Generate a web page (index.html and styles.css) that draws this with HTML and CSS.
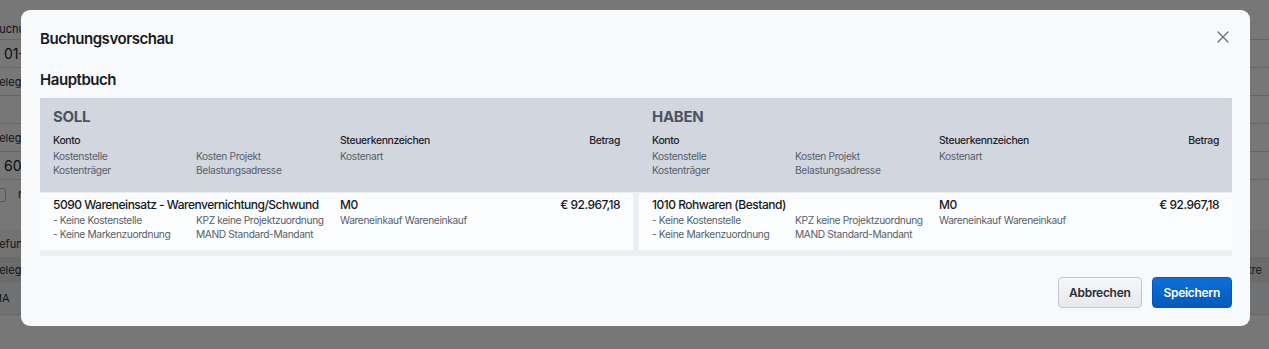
FILE: index.html
```html
<!DOCTYPE html>
<html>
<head>
    <title>Buchungsvorschau</title>
    <link rel="stylesheet" href="styles.css">
</head>
<body>
    <div class="page">
        <div class="page-row row-top"><span>Buchungsdatum</span><span></span></div>
        <div class="page-row row-input"><span>01-02-2024</span><span></span></div>
        <div class="page-row"><span>Belegnummer</span><span></span></div>
        <div class="page-row"><span></span><span></span></div>
        <div class="page-row"><span>Belegdatum</span><span></span></div>
        <div class="page-row row-input"><span>6001</span><span></span></div>
        <div class="page-row row-check"><span><i class="check"></i>nicht buchen</span><span></span></div>
        <div class="page-row row-spacer"><span></span><span></span></div>
        <div class="page-row row-section"><span>Befunde</span><span></span></div>
        <div class="page-row row-head"><span>Belegart</span><span>Mitre</span></div>
        <div class="page-row row-body"><span>MA</span><span></span></div>
    </div>

    <div class="overlay">
        <div class="modal">
            <div class="modal-header">
                <h2>Buchungsvorschau</h2>
                <svg class="close" width="12" height="12" viewBox="0 0 12 12">
                    <path d="M1 1L11 11M11 1L1 11" stroke="#6b7079" stroke-width="1.4" fill="none" stroke-linecap="round"/>
                </svg>
            </div>

            <h3>Hauptbuch</h3>

            <div class="ledger">
                <div class="ledger-head">
                    <div class="side">
                        <div class="side-title">SOLL</div>
                        <div class="cols">
                            <div class="lbl">Konto</div>
                            <div></div>
                            <div class="lbl">Steuerkennzeichen</div>
                            <div class="lbl right">Betrag</div>
                            <div class="sub">Kostenstelle</div>
                            <div class="sub">Kosten Projekt</div>
                            <div class="sub">Kostenart</div>
                            <div></div>
                            <div class="sub">Kostenträger</div>
                            <div class="sub">Belastungsadresse</div>
                        </div>
                    </div>
                    <div class="side">
                        <div class="side-title">HABEN</div>
                        <div class="cols">
                            <div class="lbl">Konto</div>
                            <div></div>
                            <div class="lbl">Steuerkennzeichen</div>
                            <div class="lbl right">Betrag</div>
                            <div class="sub">Kostenstelle</div>
                            <div class="sub">Kosten Projekt</div>
                            <div class="sub">Kostenart</div>
                            <div></div>
                            <div class="sub">Kostenträger</div>
                            <div class="sub">Belastungsadresse</div>
                        </div>
                    </div>
                </div>

                <div class="ledger-body">
                    <div class="cell">
                        <div class="cols">
                            <div class="val span2">5090 Wareneinsatz - Warenvernichtung/Schwund</div>
                            <div class="val">M0</div>
                            <div class="val right">€ 92.967,18</div>
                            <div class="sub">- Keine Kostenstelle</div>
                            <div class="sub">KPZ keine Projektzuordnung</div>
                            <div class="sub">Wareneinkauf Wareneinkauf</div>
                            <div></div>
                            <div class="sub">- Keine Markenzuordnung</div>
                            <div class="sub">MAND Standard-Mandant</div>
                        </div>
                    </div>
                    <div class="cell">
                        <div class="cols">
                            <div class="val span2">1010 Rohwaren (Bestand)</div>
                            <div class="val">M0</div>
                            <div class="val right">€ 92.967,18</div>
                            <div class="sub">- Keine Kostenstelle</div>
                            <div class="sub">KPZ keine Projektzuordnung</div>
                            <div class="sub">Wareneinkauf Wareneinkauf</div>
                            <div></div>
                            <div class="sub">- Keine Markenzuordnung</div>
                            <div class="sub">MAND Standard-Mandant</div>
                        </div>
                    </div>
                </div>
            </div>

            <div class="modal-footer">
                <button class="btn btn-cancel">Abbrechen</button>
                <button class="btn btn-save">Speichern</button>
            </div>
        </div>
    </div>
</body>
</html>
```

FILE: styles.css
```css
body {
    margin: 0;
    background: #fcfcfc;
    font-family: Inter, "Noto Sans", sans-serif;
    color: #1d2129;
    overflow: hidden;
}

/* page behind the dialog */

.page {
    margin-left: -8px;
    font-size: 11px;
    color: #2a2d33;
    white-space: nowrap;
}

.page-row {
    display: flex;
    justify-content: space-between;
    align-items: center;
    height: 27px;
    border-bottom: 1px solid #d6d8dc;
}

.row-top {
    height: 40px;
    align-items: flex-end;
    padding-bottom: 3px;
    box-sizing: border-box;
}

.row-input {
    padding-left: 12px;
    font-size: 14px;
    color: #222;
}

.row-check {
    height: 28px;
    border-bottom: none;
}

.row-spacer {
    height: 22px;
    border-bottom: none;
}

.row-section {
    background: #f3f3f4;
    border-bottom: none;
}

.row-head {
    height: 25px;
    background: #e3e4e6;
    border-bottom: none;
}

.row-head span:last-child {
    margin-right: 7px;
}

.row-body {
    height: 32px;
    background: #eef0f4;
}

.check {
    display: inline-block;
    width: 12px;
    height: 12px;
    margin: 0 12px 0 0;
    border: 1px solid #bbb;
    border-radius: 3px;
    background: #fff;
    vertical-align: middle;
}

/* dialog */

.overlay {
    position: fixed;
    inset: 0;
    display: flex;
    align-items: flex-start;
    background: rgba(0, 0, 0, 0.53);
}

.modal {
    width: 1229px;
    height: 316px;
    margin: 10px 0 0 21px;
    padding: 19px 18px 0 19px;
    box-sizing: border-box;
    border-radius: 9px;
    background: #f8f9fb;
    white-space: nowrap;
}

.modal-header {
    display: flex;
    justify-content: space-between;
    align-items: center;
    height: 20px;
}

.modal h2, .modal h3 {
    margin: 0;
    font-size: 15px;
    font-weight: 600;
    letter-spacing: -0.45px;
    line-height: 20px;
    color: #16191f;
}

.modal h3 {
    margin: 21px 0 8px;
}

.close {
    margin: -4px 3px 0 0;
}

.ledger-head {
    display: flex;
    gap: 6px;
    background: #d2d6de;
}

.side {
    flex: 1;
    padding: 9px 13px 15px;
}

.side-title {
    font-size: 15px;
    font-weight: 700;
    letter-spacing: -0.3px;
    line-height: 20px;
    color: #4b5363;
    margin-bottom: 6px;
}

.cols {
    display: grid;
    grid-template-columns: 143px 144px 1fr auto;
}

.lbl {
    font-size: 10.4px;
    font-weight: 500;
    letter-spacing: -0.35px;
    line-height: 16px;
    color: #1d2129;
}

.sub {
    font-size: 10.2px;
    letter-spacing: -0.35px;
    line-height: 14px;
    color: #575e6b;
}

.right {
    text-align: right;
}

.ledger-body {
    display: flex;
    gap: 6px;
    padding: 1px 0 6px;
    background: #eceef2;
}

.cell {
    flex: 1;
    padding: 3px 13px 9px;
    background: #fbfcfd;
}

.val {
    font-size: 12px;
    font-weight: 500;
    letter-spacing: -0.5px;
    line-height: 17px;
    color: #16191f;
}

.span2 {
    grid-column: span 2;
}

.modal-footer {
    display: flex;
    justify-content: flex-end;
    gap: 10px;
    margin-top: 21px;
}

.btn {
    height: 31px;
    padding: 0 10px;
    border-radius: 4px;
    font-family: Inter, "Noto Sans", sans-serif;
    font-size: 12px;
    font-weight: 600;
    letter-spacing: -0.3px;
    cursor: pointer;
}

.btn-cancel {
    border: 1px solid #c3c7cd;
    background: linear-gradient(#f6f7f9, #e6e8ec);
    color: #2b2f37;
}

.btn-save {
    padding: 0 11px;
    border: 1px solid #0757b4;
    background: linear-gradient(#0c6fdd, #0559ba);
    color: #fff;
}
```
